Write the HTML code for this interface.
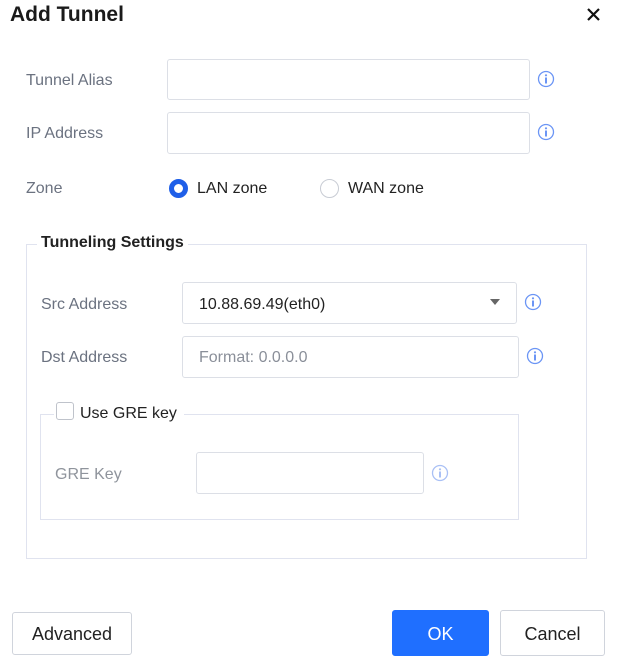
<!DOCTYPE html>
<html><head><meta charset="utf-8"><style>
*{margin:0;padding:0;box-sizing:border-box}
body{width:621px;height:666px;background:#fff;position:relative;overflow:hidden;font-family:"Liberation Sans",sans-serif;font-size:16px;color:#222}
.a{position:absolute}
.lbl{position:absolute;color:#6b7280;font-size:16px;line-height:20px}
.in{position:absolute;border:1px solid #dcdfe6;border-radius:3px;background:#fff}
.btn{position:absolute;border:1px solid #d0d4dc;border-radius:3px;text-align:center;font-size:18px;line-height:42px;color:#222;background:#fff}
svg.i{position:absolute;width:18px;height:18px}
</style></head><body>
<div class="a" style="left:10px;top:2px;font-size:21px;font-weight:bold;color:#1a1a1a;line-height:26px">Add Tunnel</div>
<svg class="a" style="left:586px;top:7px" width="15" height="15" viewBox="0 0 15 15"><path d="M2 2L13 13M13 2L2 13" stroke="#111" stroke-width="2.2"/></svg>

<div class="lbl" style="left:26px;top:71px">Tunnel Alias</div>
<div class="in" style="left:167px;top:59px;width:363px;height:41px"></div>
<div class="lbl" style="left:26px;top:124px">IP Address</div>
<div class="in" style="left:167px;top:112px;width:363px;height:42px"></div>

<svg class="i" style="left:537px;top:70px" viewBox="0 0 18 18"><circle cx="9" cy="9" r="7.5" fill="none" stroke="#6b95f5" stroke-width="1.3"/><circle cx="9" cy="5.3" r="1.1" fill="#6b95f5"/><rect x="8" y="7.5" width="2" height="6" fill="#6b95f5"/></svg>
<svg class="i" style="left:537px;top:123px" viewBox="0 0 18 18"><circle cx="9" cy="9" r="7.5" fill="none" stroke="#6b95f5" stroke-width="1.3"/><circle cx="9" cy="5.3" r="1.1" fill="#6b95f5"/><rect x="8" y="7.5" width="2" height="6" fill="#6b95f5"/></svg>

<div class="lbl" style="left:26px;top:179px">Zone</div>
<div class="a" style="left:169px;top:179px;width:19px;height:19px;border-radius:50%;border:5.5px solid #1f5fe8;background:#fff"></div>
<div class="a" style="left:197px;top:179px;line-height:20px">LAN zone</div>
<div class="a" style="left:320px;top:179px;width:19px;height:19px;border-radius:50%;border:1px solid #c8ccd4;background:#fff"></div>
<div class="a" style="left:348px;top:179px;line-height:20px">WAN zone</div>

<div class="a" style="left:26px;top:244px;width:561px;height:315px;border:1px solid #e0e3ef"></div>
<div class="a" style="left:37px;top:233px;padding:0 4px;background:#fff;font-weight:bold;font-size:16px;line-height:20px;color:#222">Tunneling Settings</div>

<div class="lbl" style="left:41px;top:295px">Src Address</div>
<div class="in" style="left:182px;top:282px;width:335px;height:42px"></div>
<div class="a" style="left:199px;top:295px;line-height:20px;color:#222">10.88.69.49(eth0)</div>
<svg class="a" style="left:490px;top:299px" width="10" height="6" viewBox="0 0 10 6"><path d="M0 0H10L5 6Z" fill="#666"/></svg>
<svg class="i" style="left:524px;top:293px" viewBox="0 0 18 18"><circle cx="9" cy="9" r="7.5" fill="none" stroke="#6b95f5" stroke-width="1.3"/><circle cx="9" cy="5.3" r="1.1" fill="#6b95f5"/><rect x="8" y="7.5" width="2" height="6" fill="#6b95f5"/></svg>

<div class="lbl" style="left:41px;top:348px">Dst Address</div>
<div class="in" style="left:182px;top:336px;width:337px;height:42px"></div>
<div class="a" style="left:199px;top:348px;line-height:20px;color:#8a8f99">Format: 0.0.0.0</div>
<svg class="i" style="left:526px;top:347px" viewBox="0 0 18 18"><circle cx="9" cy="9" r="7.5" fill="none" stroke="#6b95f5" stroke-width="1.3"/><circle cx="9" cy="5.3" r="1.1" fill="#6b95f5"/><rect x="8" y="7.5" width="2" height="6" fill="#6b95f5"/></svg>

<div class="a" style="left:40px;top:414px;width:479px;height:106px;border:1px solid #e0e3ef"></div>
<div class="a" style="left:54px;top:402px;width:130px;height:22px;background:#fff"></div>
<div class="a" style="left:56px;top:402px;width:18px;height:18px;border:1px solid #bfc3cb;border-radius:3px;background:#fff"></div>
<div class="a" style="left:80px;top:404px;line-height:20px">Use GRE key</div>

<div class="lbl" style="left:55px;top:465px;color:#8f949c">GRE Key</div>
<div class="in" style="left:196px;top:452px;width:228px;height:42px"></div>
<svg class="i" style="left:431px;top:464px" viewBox="0 0 18 18"><circle cx="9" cy="9" r="7.5" fill="none" stroke="#a9c0f5" stroke-width="1.3"/><circle cx="9" cy="5.3" r="1.1" fill="#a9c0f5"/><rect x="8" y="7.5" width="2" height="6" fill="#a9c0f5"/></svg>

<div class="btn" style="left:12px;top:612px;width:120px;height:43px">Advanced</div>
<div class="btn" style="left:392px;top:610px;width:97px;height:46px;line-height:46px;background:#1f6fff;border-color:#1f6fff;color:#fff">OK</div>
<div class="btn" style="left:500px;top:610px;width:105px;height:46px;line-height:46px">Cancel</div>
</body></html>
